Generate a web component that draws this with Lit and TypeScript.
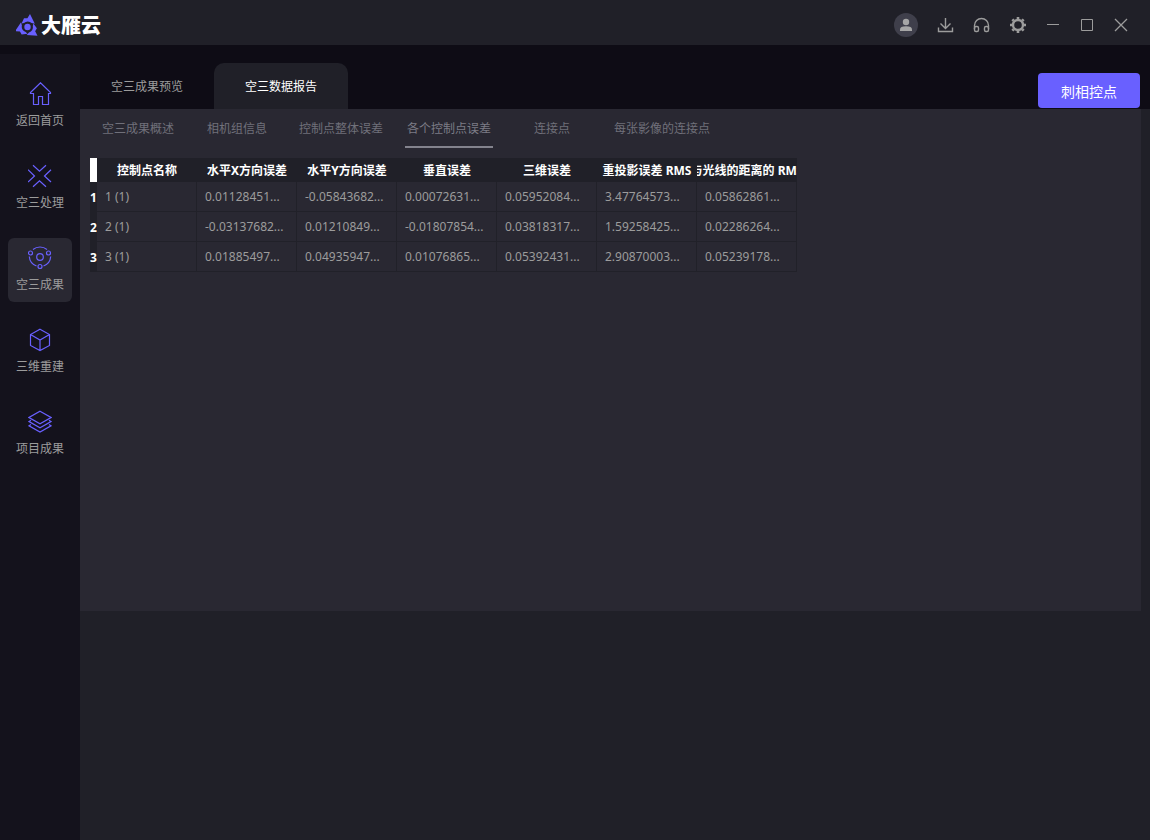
import { LitElement, html, css, svg } from "lit";
import { customElement, state } from "lit/decorators.js";
import { classMap } from "lit/directives/class-map.js";

const navItems = [
  {
    label: "返回首页",
    icon: svg`<path d="M2.500 10.500 12.500.8l10 9.700v1h-2v11h-6v-8h-4v8h-5v-11h-3z"/>`,
  },
  {
    label: "空三处理",
    icon: svg`<path d="M5 1.300l6.500 6 6.500-6M5 22.700l6.500-6 6.500 6M0 5.700l6.500 6.300L0 18M23 5.700 16.500 12l6.500 6"/>`,
  },
  {
    label: "空三成果",
    icon: svg`<circle cx="12" cy="11" r="3.300"/><circle cx="2.500" cy="7" r="2"/><circle cx="20.500" cy="7" r="2"/><circle cx="12" cy="20.500" r="2"/><path d="M5 3.500a11 11 0 0 1 14 0M1.300 10.500a11 11 0 0 0 7.200 9.500M22.700 10.500a11 11 0 0 1-7.200 9.500"/>`,
  },
  {
    label: "三维重建",
    icon: svg`<path d="M12 1.200 21.500 6.500v11L12 22.500l-9.500-5v-11zM2.500 6.500 12 12l9.500-5.500M12 12v10.500"/>`,
  },
  {
    label: "项目成果",
    icon: svg`<path d="M12 1.300 23 7.500 12 13.700 1 7.500zM3 10.300l-2 1.300 11 6.200 11-6.200-2-1.300M3 14.500l-2 1.300 11 6.200 11-6.200-2-1.300"/>`,
  },
];

const reportTabs = ["空三成果概述", "相机组信息", "控制点整体误差", "各个控制点误差", "连接点", "每张影像的连接点"];

const columns = ["控制点名称", "水平X方向误差", "水平Y方向误差", "垂直误差", "三维误差", "重投影误差 RMS", "与光线的距离的 RMS"];

const rows = [
  ["1 (1)", "0.01128451...", "-0.05843682...", "0.00072631...", "0.05952084...", "3.47764573...", "0.05862861..."],
  ["2 (1)", "-0.03137682...", "0.01210849...", "-0.01807854...", "0.03818317...", "1.59258425...", "0.02286264..."],
  ["3 (1)", "0.01885497...", "0.04935947...", "0.01076865...", "0.05392431...", "2.90870003...", "0.05239178..."],
];

@customElement("title-bar")
class TitleBar extends LitElement {
  static styles = css`
    :host { display: flex; align-items: center; height: 45px; padding: 4px 17px 0 16px; box-sizing: border-box; background: #202028; }
    .brand { display: flex; align-items: center; gap: 3px; flex: 1; color: #fff; font-size: 20px; font-weight: 900; line-height: 24px; }
    .name { padding-top: 2px; }
    .mark { width: 22px; height: 22px; fill: #6960ff; }
    button { width: 24px; height: 24px; padding: 0; border: 0; background: none; color: #9c9c9c; }
    svg { display: block; }
    .group { display: flex; }
    .tools { gap: 12px; margin-left: 15px; }
    .window { gap: 10px; margin-left: 12px; }
    .icon { width: 24px; height: 24px; fill: none; stroke: currentColor; }
    .person { width: 24px; height: 24px; fill: #a6a6a6; }
    .disc { fill: #3f3f4b; }
  `;

  render() {
    const blade = "M14 0 18.800 9.800 15.600 8.900A5.500 5.500 0 0 0 8 8.900L5.600 9.600 8 4.200 11.400 4.200Z";
    return html`
      <div class="brand">
        <svg class="mark" viewBox="0 0 22 22" aria-hidden="true">
          ${[0, 120, 240].map((a) => svg`<path d=${blade} transform="rotate(${a} 11.500 13)"/>`)}
          <circle cx="11.500" cy="13" r="3.200"/>
        </svg>
        <span class="name">大雁云</span>
      </div>
      <button aria-label="用户">
        <svg class="person" viewBox="0 0 24 24"><circle class="disc" cx="12" cy="12" r="12"/><circle cx="12" cy="9" r="3.200"/><path d="M6 18v-1.500c0-2 2-3.200 6-3.200s6 1.200 6 3.200V18z"/></svg>
      </button>
      <div class="group tools">
        <button aria-label="下载">
          <svg class="icon" viewBox="0 0 24 24" stroke-width="1.400"><path d="M12.500 5v10.500M7.500 10.500l5 5 5-5M5.500 14.500v4h14v-4"/></svg>
        </button>
        <button aria-label="客服">
          <svg class="icon" viewBox="0 0 24 24" stroke-width="1.400"><path d="M5.500 16v-3.500a7 7 0 0 1 14 0V16"/><rect x="5.500" y="13.500" width="4" height="5" rx="1.500"/><rect x="15.500" y="13.500" width="4" height="5" rx="1.500"/></svg>
        </button>
        <button aria-label="设置">
          <svg class="icon" viewBox="0 0 24 24"><circle cx="13" cy="12" r="5" stroke-width="2.400"/>
            ${[0, 45, 90, 135, 180, 225, 270, 315].map((a) => svg`<path d="M13 6V4" stroke-width="2.600" transform="rotate(${a} 13 12)"/>`)}
          </svg>
        </button>
      </div>
      <div class="group window">
        <button aria-label="最小化"><svg class="icon" viewBox="0 0 24 24"><path d="M6 11.500h12"/></svg></button>
        <button aria-label="最大化"><svg class="icon" viewBox="0 0 24 24"><path d="M6.500 6.500h11v11h-11z"/></svg></button>
        <button aria-label="关闭"><svg class="icon" viewBox="0 0 24 24" stroke-width="1.300"><path d="M6 6l12 12M18 6 6 18"/></svg></button>
      </div>
    `;
  }
}

@customElement("side-nav")
class SideNav extends LitElement {
  static styles = css`
    :host { display: block; background: #14121c; }
    nav { display: flex; flex-direction: column; align-items: center; gap: 18px; padding-top: 20px; }
    a { display: flex; flex-direction: column; align-items: center; gap: 7px; width: 64px; height: 64px; padding-top: 8px; box-sizing: border-box; border-radius: 6px; color: #9c9c9c; font-size: 12px; line-height: 16px; text-decoration: none; }
    .current { background: #292832; }
    svg { width: 24px; height: 24px; fill: none; stroke: #6960ff; stroke-width: 1.2px; }
  `;

  render() {
    return html`<nav>
      ${navItems.map(
        (item, i) => html`<a href="#" class=${classMap({ current: i === 2 })}>
          <svg viewBox="0 0 24 24" aria-hidden="true">${item.icon}</svg><span>${item.label}</span>
        </a>`
      )}
    </nav>`;
  }
}

@customElement("error-table")
class ErrorTable extends LitElement {
  static styles = css`
    :host { display: block; }
    table { width: 707px; table-layout: fixed; border-collapse: separate; border-spacing: 0; font-size: 12px; line-height: 16px; }
    .index { width: 7px; }
    th, td { padding: 0; box-sizing: border-box; overflow: hidden; white-space: nowrap; }
    th { padding-top: 2px; background: #202028; color: #fff; font-weight: 700; }
    thead th { height: 24px; }
    .corner { background: #fff; }
    .title { display: flex; justify-content: center; overflow: hidden; }
    .title span { flex: none; }
    td { height: 30px; padding: 0 0 0 8px; border-right: 1px solid #212129; border-bottom: 1px solid #212129; color: #9c9c9c; }
  `;

  render() {
    return html`<table>
      <colgroup><col class="index" />${columns.map(() => html`<col />`)}</colgroup>
      <thead>
        <tr>
          <th class="corner"></th>
          ${columns.map((c) => html`<th scope="col"><div class="title"><span>${c}</span></div></th>`)}
        </tr>
      </thead>
      <tbody>
        ${rows.map((r, i) => html`<tr><th scope="row">${i + 1}</th>${r.map((v) => html`<td>${v}</td>`)}</tr>`)}
      </tbody>
    </table>`;
  }
}

@customElement("app-root")
class AppRoot extends LitElement {
  @state() private report = 3;

  static styles = css`
    :host { display: flex; flex-direction: column; min-height: 100vh; background: #0e0c15; font-family: "Noto Sans", "Noto Sans CJK SC", sans-serif; font-size: 12px; line-height: 16px; }
    button { padding: 2px 0 0; border: 0; background: none; font: inherit; }
    .body { display: grid; grid-template-columns: 80px 1fr; flex: 1; padding-top: 9px; }
    main { display: flex; flex-direction: column; background: #202028; }
    .top { display: flex; align-items: flex-end; height: 55px; padding-right: 10px; background: #0e0c15; }
    .view { width: 134px; height: 46px; border-radius: 10px 10px 0 0; color: #9c9c9c; }
    .view.on { background: #202028; color: #fff; }
    .action { width: 102px; height: 35px; margin: 0 0 1px auto; border-radius: 4px; background: #6960ff; color: #fff; font-size: 14px; line-height: 20px; }
    .panel { height: 502px; margin-right: 9px; padding: 0 8px; box-sizing: border-box; background: #292832; }
    .reports { display: grid; grid-template-columns: 100px 98px 110px 106px 100px 120px; justify-items: center; height: 49px; }
    .report { height: 39px; padding: 2px 2px 0; border-bottom: 2px solid transparent; box-sizing: border-box; color: #70707a; }
    .report.on { border-color: #83838d; color: #7c7c86; }
    error-table { margin-left: 2px; }
  `;

  render() {
    return html`
      <title-bar></title-bar>
      <div class="body">
        <side-nav></side-nav>
        <main>
          <div class="top">
            <button class="view">空三成果预览</button>
            <button class="view on">空三数据报告</button>
            <button class="action">刺相控点</button>
          </div>
          <section class="panel">
            <div class="reports">
              ${reportTabs.map(
                (t, i) => html`<button class=${classMap({ report: true, on: i === this.report })} @click=${() => (this.report = i)}>${t}</button>`
              )}
            </div>
            <error-table></error-table>
          </section>
        </main>
      </div>
    `;
  }
}
